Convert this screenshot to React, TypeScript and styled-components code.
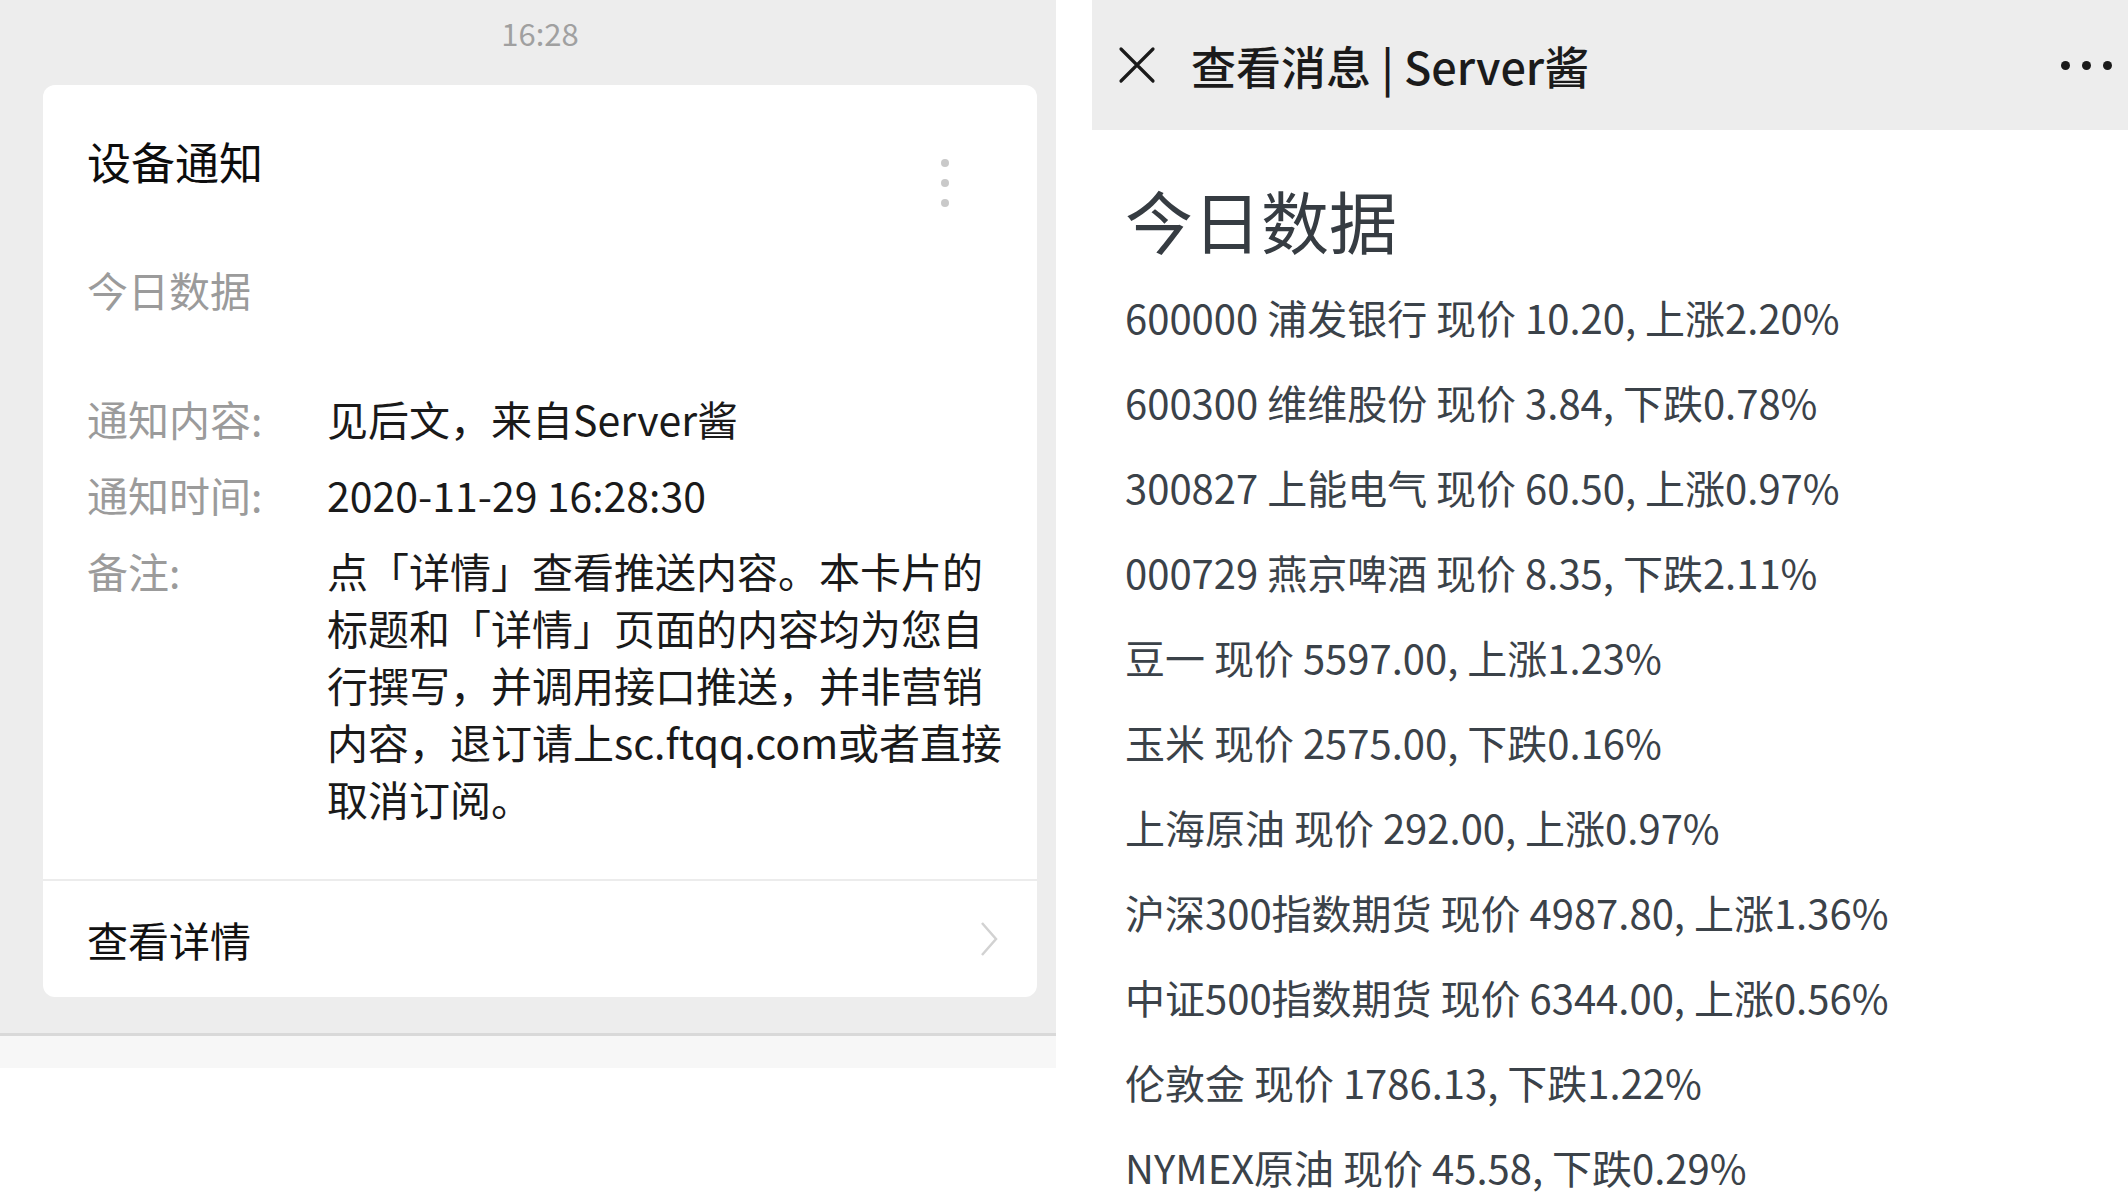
import React from "react"
import styled, { createGlobalStyle } from "styled-components"

const GlobalStyle = createGlobalStyle`
  html, body {
    margin: 0;
    padding: 0;
    background: #ffffff;
  }
  body {
    font-family: "Noto Sans CJK SC", "Noto Sans", sans-serif;
  }
`

const noteLines = [
  "点「详情」查看推送内容。本卡片的",
  "标题和「详情」页面的内容均为您自",
  "行撰写，并调用接口推送，并非营销",
  "内容，退订请上sc.ftqq.com或者直接",
  "取消订阅。",
]

const quotes = [
  "600000 浦发银行 现价 10.20, 上涨2.20%",
  "600300 维维股份 现价 3.84, 下跌0.78%",
  "300827 上能电气 现价 60.50, 上涨0.97%",
  "000729 燕京啤酒 现价 8.35, 下跌2.11%",
  "豆一 现价 5597.00, 上涨1.23%",
  "玉米 现价 2575.00, 下跌0.16%",
  "上海原油 现价 292.00, 上涨0.97%",
  "沪深300指数期货 现价 4987.80, 上涨1.36%",
  "中证500指数期货 现价 6344.00, 上涨0.56%",
  "伦敦金 现价 1786.13, 下跌1.22%",
  "NYMEX原油 现价 45.58, 下跌0.29%",
]

const App = () => (
  <>
    <GlobalStyle />
    <PageStyled>
      <ChatPaneStyled>
        <ChatAreaStyled>
          <TimeStyled>16:28</TimeStyled>
          <CardStyled>
            <CardBodyStyled>
              <CardHeadStyled>
                <CardTitleStyled>设备通知</CardTitleStyled>
                <MenuDotsStyled>
                  <span />
                  <span />
                  <span />
                </MenuDotsStyled>
              </CardHeadStyled>
              <CardSubtitleStyled>今日数据</CardSubtitleStyled>
              <FieldListStyled>
                <LabelStyled>通知内容:</LabelStyled>
                <ValueStyled>见后文，来自Server酱</ValueStyled>
                <LabelStyled>通知时间:</LabelStyled>
                <ValueStyled>2020-11-29 16:28:30</ValueStyled>
                <LabelStyled>备注:</LabelStyled>
                <ValueStyled>
                  {noteLines.map(line => (
                    <div key={line}>{line}</div>
                  ))}
                </ValueStyled>
              </FieldListStyled>
            </CardBodyStyled>
            <CardFooterStyled>
              <span>查看详情</span>
              <svg width="20" height="36" viewBox="0 0 20 36">
                <polyline
                  points="3,2 17,18 3,34"
                  fill="none"
                  stroke="#d2d2d2"
                  strokeWidth="2.5"
                />
              </svg>
            </CardFooterStyled>
          </CardStyled>
        </ChatAreaStyled>
        <InputBarStyled />
      </ChatPaneStyled>

      <DetailPaneStyled>
        <TopBarStyled>
          <svg width="38" height="38" viewBox="0 0 38 38">
            <path
              d="M3 3 L35 35 M35 3 L3 35"
              stroke="#1a1a1a"
              strokeWidth="3.2"
              strokeLinecap="round"
            />
          </svg>
          <TopTitleStyled>查看消息 | Server酱</TopTitleStyled>
          <TopDotsStyled>
            <span />
            <span />
            <span />
          </TopDotsStyled>
        </TopBarStyled>
        <ArticleStyled>
          <HeadingStyled>今日数据</HeadingStyled>
          {quotes.map(item => (
            <QuoteStyled key={item}>{item}</QuoteStyled>
          ))}
        </ArticleStyled>
      </DetailPaneStyled>
    </PageStyled>
  </>
)

const PageStyled = styled.div`
  display: flex;
  gap: 36px;
  width: 2128px;
  height: 1204px;
  overflow: hidden;
  background: #ffffff;
`

const ChatPaneStyled = styled.div`
  width: 1056px;
  flex-shrink: 0;
  display: flex;
  flex-direction: column;
`

const ChatAreaStyled = styled.div`
  height: 1036px;
  box-sizing: border-box;
  padding: 0 19px 0 43px;
  background: #ededed;
  border-bottom: 3px solid #d9d9d9;
`

const TimeStyled = styled.div`
  height: 64px;
  margin-bottom: 21px;
  display: flex;
  align-items: center;
  justify-content: center;
  font-size: 31px;
  color: #a0a0a0;
`

const CardStyled = styled.div`
  background: #ffffff;
  border-radius: 12px;
  overflow: hidden;
`

const CardBodyStyled = styled.div`
  padding: 46px 34px 52px 44px;
`

const CardHeadStyled = styled.div`
  display: flex;
  justify-content: space-between;
  align-items: flex-start;
`

const CardTitleStyled = styled.div`
  font-size: 44px;
  line-height: 60px;
  font-weight: 400;
  color: #0d0d0d;
`

const MenuDotsStyled = styled.div`
  display: flex;
  flex-direction: column;
  gap: 12px;
  margin: 28px 54px 0 0;

  span {
    width: 8px;
    height: 8px;
    border-radius: 50%;
    background: #c9c9c9;
  }
`

const CardSubtitleStyled = styled.div`
  margin-top: 54px;
  font-size: 41px;
  line-height: 57px;
  color: #9b9b9b;
`

const FieldListStyled = styled.div`
  margin-top: 72px;
  display: grid;
  grid-template-columns: 240px 1fr;
  row-gap: 19px;
`

const LabelStyled = styled.div`
  font-size: 41px;
  line-height: 57px;
  color: #9b9b9b;
  white-space: nowrap;
`

const ValueStyled = styled.div`
  font-size: 41px;
  line-height: 57px;
  color: #1a1a1a;
  white-space: nowrap;
`

const CardFooterStyled = styled.div`
  height: 118px;
  box-sizing: border-box;
  border-top: 2px solid #ececec;
  padding: 0 38px 0 44px;
  display: flex;
  align-items: center;
  justify-content: space-between;
  font-size: 41px;
  color: #111111;
`

const InputBarStyled = styled.div`
  height: 32px;
  background: #f7f7f7;
`

const DetailPaneStyled = styled.div`
  flex: 1;
  display: flex;
  flex-direction: column;
`

const TopBarStyled = styled.div`
  height: 130px;
  flex-shrink: 0;
  display: flex;
  align-items: center;
  padding: 0 16px 0 26px;
  background: #ededed;
`

const TopTitleStyled = styled.div`
  flex: 1;
  margin-left: 35px;
  font-size: 45px;
  font-weight: 500;
  color: #1b1b1b;
`

const TopDotsStyled = styled.div`
  display: flex;
  gap: 12px;

  span {
    width: 9px;
    height: 9px;
    border-radius: 50%;
    background: #1a1a1a;
  }
`

const ArticleStyled = styled.div`
  padding: 42px 33px 0;
`

const HeadingStyled = styled.h1`
  margin: 0 0 7px;
  font-size: 68px;
  line-height: 96px;
  font-weight: 400;
  color: #363c42;
`

const QuoteStyled = styled.div`
  font-size: 40px;
  line-height: 85px;
  color: #3b4249;
  white-space: nowrap;
`

export default App
